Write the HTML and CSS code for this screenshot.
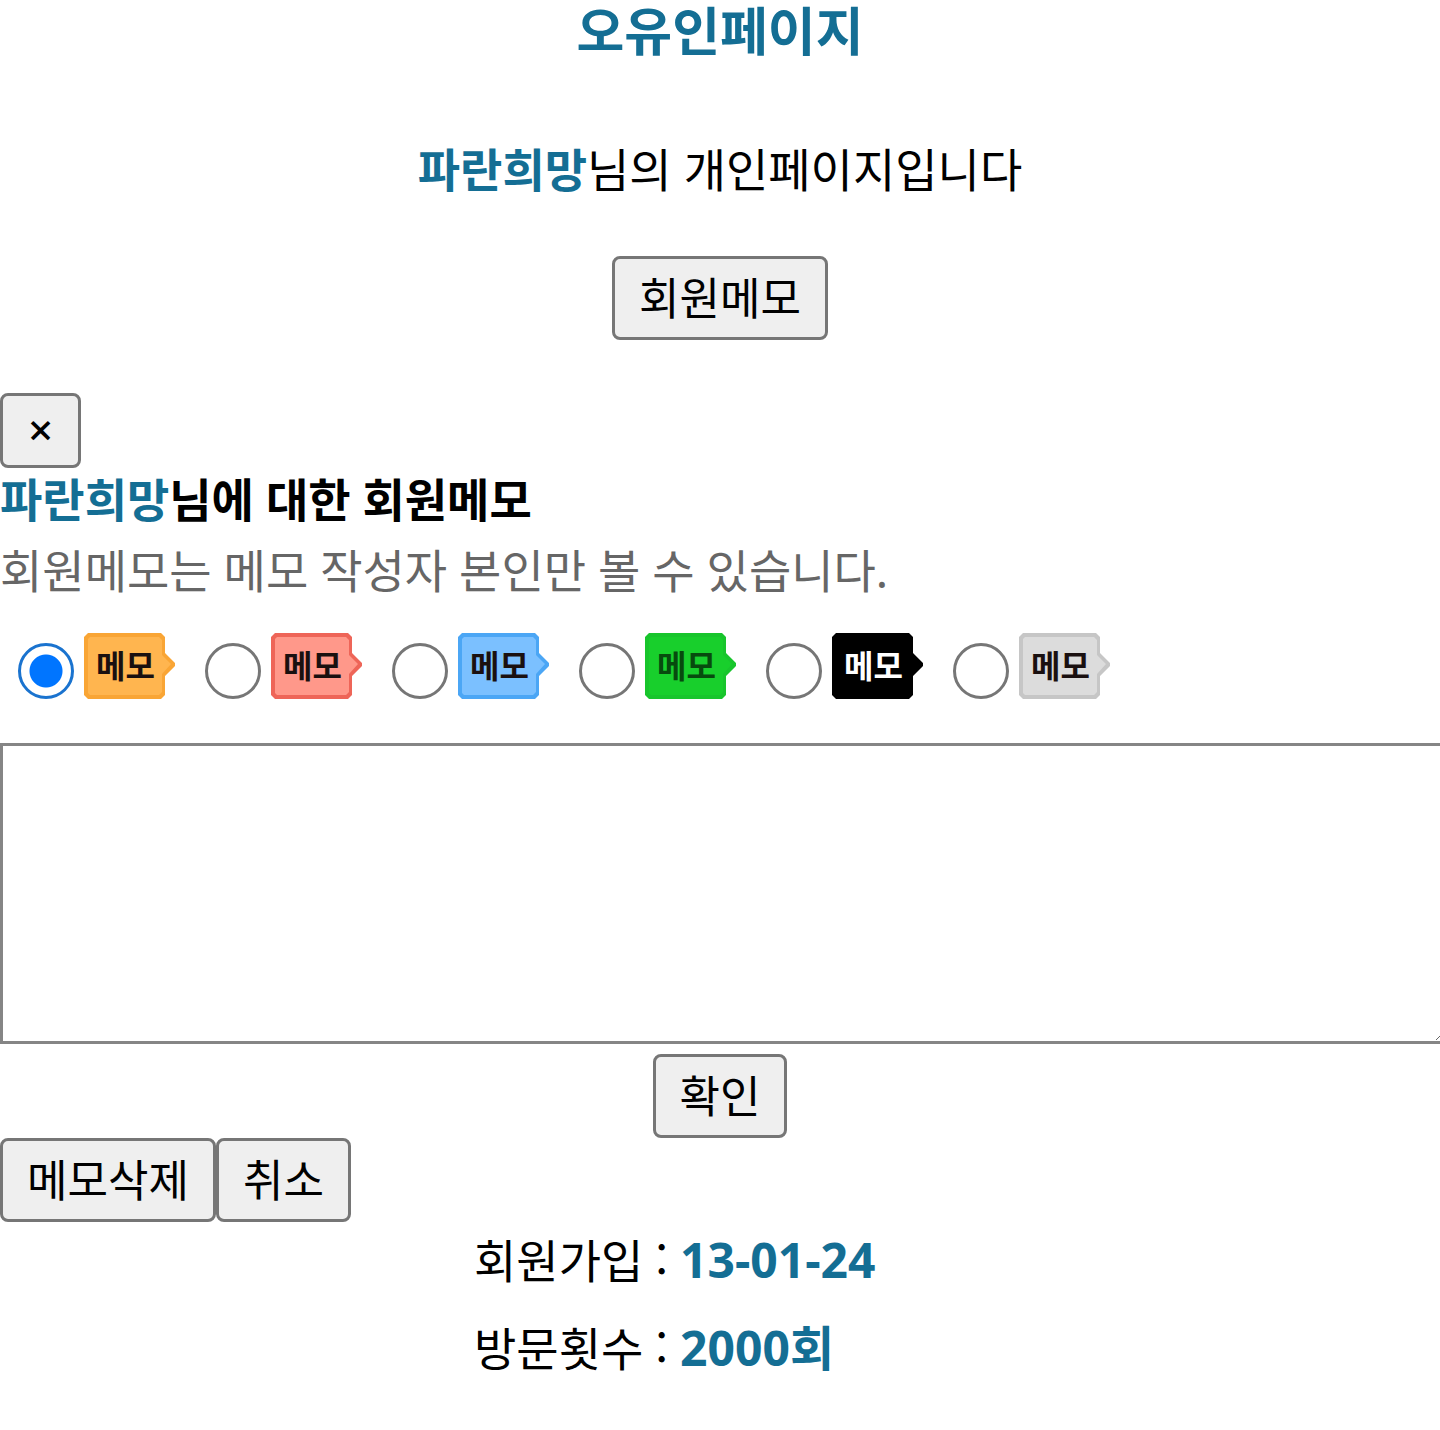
FILE: index.html
```html
<!DOCTYPE html>
<html lang="ko">
<head>
    <meta charset="UTF-8">
    <meta name="viewport" content="width=device-width, initial-scale=1.0">
    <title>오유인페이지</title>
    <link rel="stylesheet" href="styles.css">
</head>
<body>
    <!-- speech tag shape shared by the memo colors -->
    <svg class="defs" width="0" height="0" aria-hidden="true">
        <symbol id="tag" viewBox="0 0 92 66">
            <path class="edge" d="M4 0H77L81 4V20L91 30V33L81 43V62L77 66H4L0 62V4Z"/>
            <path class="fill" d="M6 4H75L78 7V22L87 31L78 41V59L75 62H6L4 60V6Z"/>
        </symbol>
    </svg>

    <h1 class="page-title">오유인페이지</h1>
    <p class="intro"><strong class="name">파란희망</strong>님의 개인페이지입니다</p>
    <button type="button" class="btn memo-open">회원메모</button>

    <form class="memo-form">
        <button type="button" class="btn btn-close" aria-label="닫기">×</button>
        <h2 class="memo-title"><span class="name">파란희망</span>님에 대한 회원메모</h2>
        <p class="memo-desc">회원메모는 메모 작성자 본인만 볼 수 있습니다.</p>

        <div class="colors">
            <label class="color"><input type="radio" name="color" checked><svg class="tag orange"><use href="#tag"/><text x="12" y="45">메모</text></svg></label>
            <label class="color"><input type="radio" name="color"><svg class="tag red"><use href="#tag"/><text x="12" y="45">메모</text></svg></label>
            <label class="color"><input type="radio" name="color"><svg class="tag blue"><use href="#tag"/><text x="12" y="45">메모</text></svg></label>
            <label class="color"><input type="radio" name="color"><svg class="tag green"><use href="#tag"/><text x="12" y="45">메모</text></svg></label>
            <label class="color"><input type="radio" name="color"><svg class="tag black"><use href="#tag"/><text x="12" y="45">메모</text></svg></label>
            <label class="color"><input type="radio" name="color"><svg class="tag gray"><use href="#tag"/><text x="12" y="45">메모</text></svg></label>
        </div>

        <textarea class="memo-text" aria-label="회원메모"></textarea>
        <button type="submit" class="btn btn-ok">확인</button>
        <div class="memo-actions">
            <button type="button" class="btn">메모삭제</button>
            <button type="button" class="btn">취소</button>
        </div>
    </form>

    <div class="info">
        <p>회원가입 <span class="colon">:</span> <strong class="name">13-01-24</strong></p>
        <p>방문횟수 <span class="colon">:</span> <strong class="name">2000회</strong></p>
    </div>
</body>
</html>
```
FILE: styles.css
```css
* { box-sizing: border-box; }
body {
    margin: 0;
    font-family: "Noto Sans", "Noto Sans CJK KR", sans-serif;
    font-size: 46px;
    line-height: 68px;
    color: #000;
    overflow-x: hidden;
}
h1, h2, p { margin: 0; }
.defs { position: absolute; }
.name { color: #146e94; font-weight: bold; }
.page-title {
    font-size: 52px;
    line-height: 62px;
    color: #146e94;
    text-align: center;
}
.intro { margin-top: 73px; text-align: center; }
.btn {
    display: block;
    height: 84px;
    padding: 0 24px;
    border: 3px solid #767676;
    border-radius: 8px;
    background: #efefef;
    color: #000;
    font-family: inherit;
    font-size: 44px;
    line-height: 76px;
}
.memo-open { margin: 53px auto; }
.btn-close {
    height: 75px;
    padding: 0 25px 4px;
    font-weight: 500;
    line-height: 60px;
}
.memo-title { font-size: 46px; line-height: 62px; }
.memo-desc { color: #666; line-height: 80px; }
.colors {
    display: flex;
    gap: 29px;
    margin: 23px 0 44px;
    padding-left: 18px;
}
.color { display: flex; align-items: center; gap: 10px; }
.color input {
    appearance: none;
    width: 56px;
    height: 56px;
    margin: 10px 0 0;
    border: 3px solid #767676;
    border-radius: 50%;
    background: #fff;
}
.color input:checked {
    border-color: #1a73cf;
    background: radial-gradient(circle, #0075ff 16px, #fff 17px);
}
.tag { width: 92px; height: 66px; }
.tag text { fill: #1a1010; font-size: 32px; font-weight: bold; }
.edge { fill: var(--edge); }
.fill { fill: var(--fill); }
.orange { --edge: #f9a535; --fill: #ffb54f; }
.red { --edge: #ee6558; --fill: #ff988a; }
.blue { --edge: #4ba6f5; --fill: #7bc0ff; }
.green { --edge: #18c52c; --fill: #18cf2c; }
.black { --edge: #000; --fill: #000; }
.gray { --edge: #c6c6c6; --fill: #dcdcdc; }
.tag.green text { fill: #074a0e; }
.tag.black text { fill: #fff; }
.memo-text {
    display: block;
    width: calc(100% + 7px);
    height: 301px;
    border: 3px solid #858585;
}
.btn-ok { margin: 10px auto 0; }
.memo-actions { display: flex; }
.info {
    display: grid;
    gap: 12px;
    width: 492px;
    margin: 0 auto;
}
.info p { height: 76px; line-height: 72px; }
.info .name { font-size: 48px; }
.colon { font-family: "Noto Sans CJK KR", sans-serif; }
```
